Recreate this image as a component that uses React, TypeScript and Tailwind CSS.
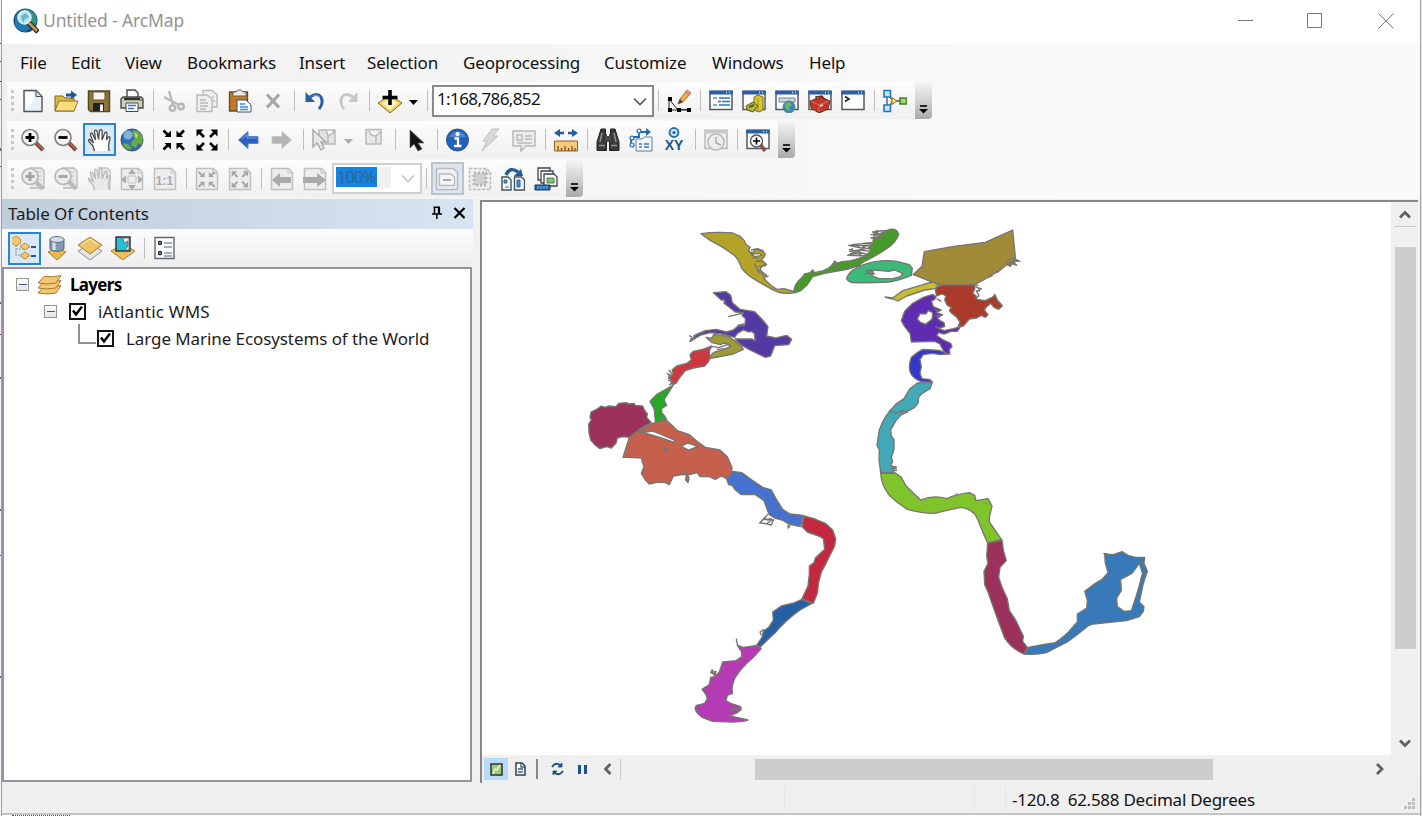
import React from "react";

type Kids = { children?: React.ReactNode };

const Ico = ({ children }: Kids) => (
  <div className="flex h-8 w-[33px] shrink-0 items-center justify-center pr-px">
    <svg width="24" height="24" viewBox="0 0 24 24" fill="none">
      {children}
    </svg>
  </div>
);

const Sep = () => (
  <div className="flex w-[9px] shrink-0 justify-center">
    <div className="h-[21px] w-px bg-[#bdbdbd]" />
  </div>
);

const Grip = () => (
  <div className="mr-[3px] flex w-[3px] shrink-0 flex-col gap-[3px]">
    {[0, 1, 2, 3].map((i) => (
      <div key={i} className="h-[3px] w-[3px] bg-[#c6c6c6]" />
    ))}
  </div>
);

const Overflow = () => (
  <div className="ml-[3px] flex h-full w-[17px] shrink-0 items-end justify-center rounded-r-sm bg-linear-to-b from-[#f4f4f4] via-[#d2d2d2] to-[#a9a9a9] pb-[5px]">
    <svg width="9" height="9" viewBox="0 0 9 9">
      <path d="M1 1h7" stroke="#000" strokeWidth="1.600" />
      <path d="M0 4h9L4.500 8.500z" fill="#000" />
    </svg>
  </div>
);

const Bar = ({ children }: Kids) => (
  <div className="flex h-[39px] items-start pl-[5px]">
    <div className="flex h-[37px] items-center rounded-r bg-linear-to-b from-[#fcfcfc] to-[#f0f0f0] pl-[4px]">
      {children}
    </div>
  </div>
);

const G = "#b9b9b9";

const Magnifier = ({ minus, gray }: { minus?: boolean; gray?: boolean }) => (
  <>
    {gray && <path d="M8 1h12l3 3v17H9" fill="#e9e9e9" stroke={G} strokeWidth="1.300" />}
    {gray && <path d="M15 5h5M17 9h3M17 13h3M17 17h3" stroke="#c4c4c4" />}
    <path d="M15 15l7 7" stroke={gray ? "#bababa" : "#7c3e33"} strokeWidth="4" />
    {!gray && <path d="M16 15.500l6 6" stroke="#b77566" strokeWidth="1.200" />}
    <circle cx="9" cy="9.500" r="8" fill={gray ? "#ececec" : "#f5f5f5"} stroke={gray ? "#b8b8b8" : "#858585"} strokeWidth="1.700" />
    <path d={minus ? "M4.500 9.500h9" : "M4.500 9.500h9M9 5v9"} stroke={gray ? "#a4a4a4" : "#000"} strokeWidth="2.800" />
  </>
);

const Hand = ({ gray }: { gray?: boolean }) => (
  <path
    d="M7.500 23 6 18 2 13.500Q.5 11 3 11.500L6.500 15 3.500 7Q3 4.500 5.200 5.200L8.500 12 7.500 3.500Q8 1 10 3L11.500 11.500 12.500 2.500Q14 .5 15.200 3L15 12 18 4.500Q19.800 3 20 5.500L19.500 12 21 9.500Q23 7.500 23 10.500L21.500 17 22 23"
    fill={gray ? "#e9e9e9" : "#fff"}
    stroke={gray ? "#b9b9b9" : "#4c4c4c"}
    strokeWidth="1.300"
  />
);

const Inward = ({ c = "#000" }: { c?: string }) => (
  <g fill={c} stroke={c}>
    <path d="M1.500 2.500l5 5M22 2.500l-5 5M1.500 21.500l5-5M22 21.500l-5-5" strokeWidth="2.600" />
    <path d="M9 2.500V9H2.500zM14.500 2.500V9H21zM2.500 15H9v6.500zM21 15h-6.500v6.500z" stroke="none" />
  </g>
);
const Outward = ({ c = "#000" }: { c?: string }) => (
  <g fill={c} stroke={c}>
    <path d="M4 4l5 5M20 4l-5 5M4 20l5-5M20 20l-5-5" strokeWidth="2.600" />
    <path d="M1.500 8.500V1.500h7zM15.500 1.500h7v7zM1.500 15.500v7h7zM22.500 15.500v7h-7z" stroke="none" />
  </g>
);

const GrayPage = ({ children }: Kids) => (
  <>
    <path d="M1.500 1.500h17l4 4v17h-21z" fill="#ededed" stroke="#c0c0c0" strokeWidth="1.500" />
    <path d="M18 2v4h4" stroke="#c0c0c0" />
    {children}
  </>
);

const Win = ({ children, gray }: Kids & { gray?: boolean }) => (
  <>
    <path d="M1 2.500h22v18H1z" fill={gray ? "#eee" : "#fbfcfd"} stroke={gray ? "#b9b9b9" : "#55585f"} strokeWidth="1.500" />
    <path d="M.3 1.500h23.400v4H.3z" fill={gray ? "#c7c7c7" : "#2a5fa5"} />
    {!gray && <path d="M17 3.500h1M20 3.500h1" stroke="#dce9f8" strokeWidth="1.500" />}
    {children}
  </>
);

const DropArrow = ({ gray }: { gray?: boolean }) => (
  <svg width="9" height="5" viewBox="0 0 9 5">
    <path d="M0 0h9L4.500 5z" fill={gray ? "#aaa" : "#000"} />
  </svg>
);

const Chevron = ({ c = "#555" }: { c?: string }) => (
  <svg width="14" height="9" viewBox="0 0 14 9" fill="none">
    <path d="M1 1.500l6 6 6-6" stroke={c} strokeWidth="1.600" />
  </svg>
);

function StandardBar() {
  return (
    <Bar>
      <Grip />
      <Ico>
        <path d="M3 1.500h12l6 6v15H3z" fill="#e9f1f8" stroke="#4d5159" strokeWidth="1.400" />
        <path d="M5 3h8v9L5 20z" fill="#fff" />
        <path d="M15 1.500v6h6z" fill="#d7dde3" stroke="#4d5159" />
      </Ico>
      <Ico>
        <path d="M1 22V7h8l2 2h9v13z" fill="#ddb646" stroke="#80651f" />
        <path d="M1 22l4-10h19l-4 10z" fill="#f9dd78" stroke="#8d7023" />
        <path d="M12 6h6" stroke="#1d5b98" strokeWidth="3" />
        <path d="M17 1.500L23 6l-6 4.500z" fill="#1d5b98" />
      </Ico>
      <Ico>
        <path d="M1.500 2h21v20.500h-19l-2-2z" fill="#8b7638" stroke="#55471e" strokeWidth="1.500" />
        <path d="M6 3h12v8H6z" fill="#f4f4f0" stroke="#60522d" />
        <path d="M6 14h11v8H6z" fill="#222" />
        <path d="M13 15.500h3V22h-3z" fill="#f6f6f6" />
      </Ico>
      <Ico>
        <path d="M7 9V1h8l3 3v5" fill="#f9fcff" stroke="#4b4b4b" strokeWidth="1.400" />
        <path d="M1 10l2-2h18l2 2v9H1z" fill="#ced0b4" stroke="#484b44" strokeWidth="1.400" />
        <path d="M4 10h16" stroke="#31342b" strokeWidth="2.500" />
        <path d="M6 14h12v8.500H6z" fill="#fff" stroke="#45484c" />
        <path d="M8 16.500h8M8 19.500h6" stroke="#3479bd" strokeWidth="1.300" />
        <path d="M20 11h2" stroke="#4b9b37" strokeWidth="1.500" />
      </Ico>
      <Sep />
      <Ico>
        <g stroke="#b8b8b8" strokeWidth="2.400">
          <path d="M7 2l4 14M2 8l15 8" />
          <circle cx="10.500" cy="19" r="2.800" />
          <circle cx="19" cy="17.500" r="2.800" />
        </g>
      </Ico>
      <Ico>
        <g fill="#efefef" stroke={G} strokeWidth="1.400">
          <path d="M8 1.500h9l5 4V18H8z" />
          <path d="M2 6h10l5 4v12.500H2z" />
          <path d="M5 11h6M5 14h8M5 17h8M5 20h6M17 8h2M18 12h2" />
        </g>
      </Ico>
      <Ico>
        <path d="M1.500 3h18v19h-18z" fill="#c17b26" stroke="#6f491b" strokeWidth="1.300" />
        <path d="M5 7V3h3l2-2h3l2 2h3v4z" fill="#e8e8e6" stroke="#66635e" />
        <path d="M9 11h9l5 5v7H9z" fill="#fff" stroke="#3e536a" />
        <path d="M12 15h5M12 18h8M12 20.500h8" stroke="#398bdc" strokeWidth="1.500" />
      </Ico>
      <Ico>
        <path d="M6 5.500l12 13M18 5.500l-12 13" stroke="#a6a6a6" strokeWidth="3.200" />
      </Ico>
      <Sep />
      <Ico>
        <path d="M7 8q7-5 11 0 3 6-2 12" stroke="#265f9c" strokeWidth="3" />
        <path d="M2.500 3v10H12z" fill="#265f9c" />
        <path d="M10 7q4-2 7 1" stroke="#76aee0" />
      </Ico>
      <Ico>
        <path d="M17 8Q10 3 6 8q-3 6 2 12" stroke="#c6c6c6" strokeWidth="2.800" />
        <path d="M21.500 3v10H12z" fill="#c6c6c6" />
      </Ico>
      <Sep />
      <Ico>
        <path d="M12 6l12 8-12 10L0 14z" fill="#f6ce63" stroke="#866724" />
        <path d="M12 9l8 5-8 7-8-7z" fill="#fff2b8" />
        <path d="M12 1v15M4.500 8.500h15" stroke="#000" strokeWidth="3.600" />
      </Ico>
      <div className="flex w-4 shrink-0 justify-center pr-1 pt-1">
        <DropArrow />
      </div>
      <Sep />
      <div className="flex h-[32px] w-[222px] shrink-0 items-start justify-between border-2 border-[#898989] bg-white pl-[3px]">
        <span className="text-[17px] leading-[23px] tracking-[-0.600px]">1:168,786,852</span>
        <div className="flex h-full items-center pr-[5px] pt-[2px]">
          <Chevron />
        </div>
      </div>
      <Sep />
      <Ico>
        <path d="M2 10l8 10L22 21H2z" stroke="#222" />
        <path d="M1 8h4v4H1zM1 19h4v4H1zM10 19h4v4h-4zM20 19h4v4h-4z" fill="#000" />
        <path d="M11 15l2-5 7-9 4 3-8 9z" fill="#eeb13f" stroke="#80612d" strokeWidth=".8" />
        <path d="M20 1l4 3-2 3-4-3z" fill="#d88c79" />
        <path d="M11 15l2-5 3 3z" fill="#554128" />
      </Ico>
      <Sep />
      <Ico>
        <Win>
          <path d="M10 9h11M13 12.500h8M10 16h11" stroke="#3275ba" strokeWidth="1.700" />
          <path d="M4 9h4M4 16h4" stroke="#4e90d0" strokeWidth="1.700" />
          <path d="M9 12.500h3" stroke="#d64731" strokeWidth="1.700" />
        </Win>
      </Ico>
      <Ico>
        <Win>
          <path d="M12 8l4-2 5 2v13l-4 2-5-2z" fill="#dac62b" stroke="#756b12" />
          <path d="M16 9v13" stroke="#9a8d1c" />
          <path d="M4 17l7-4 5 4-5 6-6-2z" fill="#b9b13a" stroke="#5c5a1c" />
          <path d="M7 18l5-2" stroke="#3d6b2d" strokeWidth="2" />
        </Win>
      </Ico>
      <Ico>
        <Win>
          <path d="M4 9h16v4H4z" fill="#d1d7dc" stroke="#74808b" />
          <circle cx="14" cy="18" r="6" fill="#3c87bd" stroke="#567c91" />
          <path d="M10 14l5-1 2 3-3 2 1 4-4-2z" fill="#69b768" />
        </Win>
      </Ico>
      <Ico>
        <Win>
          <path d="M2 12l11-4 9 4-2 8-9 4-8-5z" fill="#c0382a" stroke="#70251d" />
          <path d="M3 12l8 4 10-4M11 16v7" stroke="#e08070" strokeWidth=".8" />
          <path d="M8 11V8l6-1 2 3" stroke="#752b24" strokeWidth="1.500" />
          <path d="M12 17l3-1" stroke="#eadcd8" strokeWidth="1.500" />
        </Win>
      </Ico>
      <Ico>
        <Win>
          <path d="M4 7.500l4 2.500-4 2.500" stroke="#20242b" strokeWidth="1.600" />
        </Win>
      </Ico>
      <Sep />
      <Ico>
        <path d="M4 5v14M5 5l5 7M5 19l5-7h8" stroke="#46515e" strokeWidth="1.300" />
        <path d="M1 1.500h6.500V8H1zM1 16h6.500v6.500H1z" fill="#c4e1fa" stroke="#2673ba" strokeWidth="1.600" />
        <path d="M9 8.500l5 3.500-5 3.500z" fill="#ffe475" stroke="#99721c" />
        <path d="M17 9h6.500v6H17z" fill="#9fda6c" stroke="#3f812b" strokeWidth="1.600" />
      </Ico>
      <Overflow />
    </Bar>
  );
}

function ToolsBar() {
  return (
    <Bar>
      <Grip />
      <Ico><Magnifier /></Ico>
      <Ico><Magnifier minus /></Ico>
      <div className="flex h-[33px] w-[33px] shrink-0 items-center justify-center border-2 border-[#2d83d3] bg-[#d9e8f5]">
        <Ico><Hand /></Ico>
      </div>
      <Ico>
        <circle cx="12" cy="12" r="11" fill="#2f6fb5" stroke="#345171" />
        <circle cx="8" cy="7" r="4.500" fill="#a5cdf0" opacity=".7" />
        <path d="M13 2l5 1 5 6-1 8-4-2-2 5-5-3 1-4 3-3-3-3zM3 15l5 1 4 4-3 2-5-3z" fill="#6aaa46" />
        <path d="M14 4l4 3-2 4z" fill="#b5d983" />
      </Ico>
      <Sep />
      <Ico><Inward /></Ico>
      <Ico><Outward /></Ico>
      <Sep />
      <Ico>
        <path d="M1.500 12L11 3.500v5h10v7H11v5z" fill="#2c60c0" stroke="#5a83c9" />
        <path d="M5 11l5-4.500v3.500h10" stroke="#6fa1e7" />
      </Ico>
      <Ico>
        <path d="M21.500 12L12 3.500v5H2v7h10v5z" fill="#b4b4b4" stroke="#c6c6c6" />
      </Ico>
      <Sep />
      <Ico>
        <path d="M7 2h16v14H7zM14 2l2 6 4-2 3-4M16 8v8" fill="#e2e2e2" stroke="#b7b7b7" strokeWidth="1.400" />
        <path d="M1 2v17l4-4 4 7 3-2-3-6h5z" fill="#e7e7e7" stroke="#ababab" strokeWidth="1.500" />
      </Ico>
      <div className="flex w-[17px] shrink-0 justify-center pr-[3px] pt-1"><DropArrow gray /></div>
      <Ico>
        <path d="M4 1.500h15V16H4zM7 3q1 5 7 5l4-4M14 8v7" fill="#e9e9e9" stroke={G} strokeWidth="1.500" />
      </Ico>
      <Sep />
      <Ico>
        <path d="M6 2v18l4-4 4 7 4-2-4-6h6z" fill="#151515" stroke="#555" strokeWidth=".6" />
      </Ico>
      <Sep />
      <Ico>
        <circle cx="11.500" cy="12" r="11" fill="#2260bd" stroke="#335586" />
        <path d="M3 9Q11.500-2 20 9" fill="#76a5df" opacity=".6" />
        <circle cx="11.500" cy="6" r="2" fill="#fff" />
        <path d="M8.500 10.500h3.500V18M8 18h7.500" stroke="#fff" strokeWidth="2.300" />
      </Ico>
      <Ico>
        <path d="M13 1h7l-6 7h5L3 23l5-10H4z" fill="#d9d9d9" stroke="#c0c0c0" />
      </Ico>
      <Ico>
        <path d="M1 3h22v15h-9l-5 5v-5H1z" fill="#ededed" stroke="#b8b8b8" strokeWidth="1.500" />
        <path d="M5 7h5v5H5zM13 8h7M13 11h7M5 15h15" stroke={G} strokeWidth="1.500" />
      </Ico>
      <Sep />
      <Ico>
        <path d="M3 5h7M14 5h7" stroke="#205f9e" strokeWidth="2.300" />
        <path d="M0 5l6-4v8zM24 5l-6-4v8z" fill="#205f9e" />
        <path d="M.5 13h23v10H.5z" fill="#f5ca7c" stroke="#966025" />
        <path d="M4 18v5M7.500 20v3M11 18v5M14.500 20v3M18 18v5M21 20v3" stroke="#6f4b25" strokeWidth="1.200" />
      </Ico>
      <Sep />
      <Ico>
        <path d="M5 1h4.500v4l1 3v14.500H1V14zM14.500 1H19l4 13v8.500h-9.500V8l1-3z" fill="#3b3b3b" stroke="#222" />
        <path d="M9 8h6v6H9z" fill="#4a4a4a" />
        <path d="M6 5L4 14M18 5l2 9M3 17.500h6M15 17.500h6" stroke="#929292" strokeWidth="1.500" />
      </Ico>
      <Ico>
        <path d="M2 16V9h8V4h9" stroke="#236baa" strokeWidth="1.800" />
        <path d="M17 0l5 4-5 4z" fill="#236baa" />
        <g fill="#e5f2ff" stroke="#236baa" strokeWidth="1.200">
          <circle cx="3" cy="17" r="2" />
          <circle cx="3" cy="10" r="2" />
          <circle cx="10" cy="3" r="2" />
        </g>
        <path d="M7 11h6l2-2h8v14H7z" fill="#f3f8fc" stroke="#5f7e9c" />
        <path d="M10 16h3M15 16h5M10 19h3M15 19h5" stroke="#3f76aa" strokeWidth="1.400" />
      </Ico>
      <div className="flex h-8 w-[33px] shrink-0 flex-col items-center justify-center pr-px">
        <svg width="12" height="11" viewBox="0 0 12 11" fill="none">
          <circle cx="6" cy="5.500" r="4.400" fill="#d2e8fa" stroke="#2871b0" strokeWidth="2" />
          <circle cx="6" cy="5.500" r="1.500" fill="#175492" />
        </svg>
        <span className="font-['Liberation_Sans',sans-serif] text-[14px] font-bold leading-[14px] text-[#175492]">XY</span>
      </div>
      <Sep />
      <Ico>
        <Win gray>
          <circle cx="12" cy="14" r="8" fill="#ededed" stroke={G} strokeWidth="1.500" />
          <path d="M12 9v6l5 2" stroke="#aaa" strokeWidth="1.400" />
        </Win>
      </Ico>
      <Sep />
      <Ico>
        <Win>
          <path d="M15 17l4 6" stroke="#88513f" strokeWidth="3.500" />
          <circle cx="10.500" cy="13" r="6" fill="#f9f9f9" stroke="#4e5156" strokeWidth="1.300" />
          <path d="M7 13h7M10.500 9.500v7" stroke="#000" strokeWidth="1.600" />
        </Win>
      </Ico>
      <Overflow />
    </Bar>
  );
}

function LayoutBar() {
  return (
    <Bar>
      <Grip />
      <Ico><Magnifier gray /></Ico>
      <Ico><Magnifier gray minus /></Ico>
      <Ico>
        <path d="M11 1h9l3 3v18H12" fill="#eee" stroke="#c0c0c0" strokeWidth="1.300" />
        <Hand gray />
      </Ico>
      <Ico>
        <GrayPage>
          <path d="M12 2l4 5H8zM12 23l4-5H8zM1 12.500l5-4v8zM23 12.500l-5-4v8z" fill="#aaa" />
          <path d="M8 9h8v7H8z" stroke="#c2c2c2" />
        </GrayPage>
      </Ico>
      <Ico>
        <GrayPage>
          <text x="11.500" y="18" textAnchor="middle" fontFamily="Liberation Sans, sans-serif" fontWeight="700" fontSize="12" fill="#aaa">1:1</text>
        </GrayPage>
      </Ico>
      <Sep />
      <Ico>
        <GrayPage><g transform="translate(2.500 3) scale(.78)"><Inward c="#a6a6a6" /></g></GrayPage>
      </Ico>
      <Ico>
        <GrayPage><g transform="translate(2.500 3) scale(.78)"><Outward c="#a6a6a6" /></g></GrayPage>
      </Ico>
      <Sep />
      <Ico>
        <GrayPage><path d="M2 13l8-7v4h11v6H10v4z" fill="#aaa" /></GrayPage>
      </Ico>
      <Ico>
        <GrayPage><path d="M23 13l-9-7v4H0v6h14v4z" fill="#aaa" /></GrayPage>
      </Ico>
      <div className="flex h-[31px] w-[90px] shrink-0 items-start justify-between border-2 border-[#d0d0d0] bg-white pl-[2px] pr-[5px] pt-[2px]">
        <div className="flex h-[21px] w-[55px] bg-[#f0f0f0]">
          <span className="h-[20px] w-[41px] bg-[#1683e0] pl-px text-[16.500px] leading-[19px] tracking-[-0.900px] text-[#346590]">100%</span>
        </div>
        <div className="flex h-[23px] items-center"><Chevron c="#c0c0c0" /></div>
      </div>
      <Sep />
      <div className="flex h-[33px] w-[33px] shrink-0 items-center justify-center border-2 border-[#bcc3ca] bg-[#dce6ef]">
        <Ico>
          <path d="M1.500 1.500h17l4 4v17h-21z" fill="#edf0f3" stroke="#b4bac0" strokeWidth="1.500" />
          <path d="M4.500 7h11l4 3v8.500h-15z" fill="#f5f6f7" stroke={G} strokeWidth="1.400" />
          <path d="M8 13h8" stroke="#aaa" strokeWidth="2" />
        </Ico>
      </div>
      <Ico>
        <path d="M1.500 1.500h17l4 4v17h-21z" fill="#eee" stroke="#b8b8b8" strokeWidth="1.500" strokeDasharray="3 1.500" />
        <path d="M6 6h12v12H6z" fill="#d0d0d0" stroke="#b6b6b6" strokeWidth="3" strokeDasharray="2 2" />
        <path d="M18 2v4h4" stroke={G} />
      </Ico>
      <Ico>
        <path d="M5 8Q9-1 17 5" stroke="#225c95" strokeWidth="3.400" />
        <path d="M13 9h9l-2-7z" fill="#225c95" />
        <path d="M1 10h6l3 3v10H1zM13.500 10h7l3 3v10h-10z" fill="#f7fafc" stroke="#46515a" strokeWidth="1.400" />
        <path d="M3 13h3v3H3zM4 20h4M16 13h3v7h-3z" fill="#438bc9" stroke="#276aa8" />
      </Ico>
      <Ico>
        <g fill="#fff" stroke="#3f4347" strokeWidth="1.300">
          <path d="M4 1h12v12H4z" />
          <path d="M7 4h12v12H7z" />
          <path d="M10 7h10l3 3v9H10z" />
        </g>
        <path d="M13 11h7v5h-7z" fill="#8ac278" stroke="#3f8145" />
        <path d="M1 18h15v5H1z" fill="#2469ac" stroke="#143b64" />
        <path d="M4 19v3M7 19v3M10 19v3M13 19v3" stroke="#8fc3ef" />
      </Ico>
      <Overflow />
    </Bar>
  );
}

function Expander() {
  return (
    <div className="flex h-[13px] w-[13px] shrink-0 items-center justify-center border border-[#959595] bg-linear-to-b from-white to-[#e4e4e4]">
      <div className="h-[1.500px] w-[8px] bg-[#3c5a96]" />
    </div>
  );
}

function Check() {
  return (
    <div className="flex h-[17px] w-[17px] shrink-0 items-center justify-center border-2 border-[#151515] bg-white">
      <svg width="13" height="13" viewBox="0 0 13 13" fill="none">
        <path d="M2 5.500l3 4 6-8" stroke="#000" strokeWidth="2.400" />
      </svg>
    </div>
  );
}

function Contents() {
  return (
    <div className="flex w-[471px] shrink-0 flex-col">
      <div className="flex h-[30px] shrink-0 items-center justify-between bg-linear-to-r from-[#c0cddb] to-[#d7e4f2] pl-[6px] pr-[7px]">
        <span className="text-[17px] tracking-[-0.070px] text-[#1c1c1c]">Table Of Contents</span>
        <svg className="mb-[3px]" width="35" height="16" viewBox="0 0 35 16" fill="none" stroke="#000">
          <path d="M2.500 2.200h6.500M3.500 2v7M1 9h10M5.800 9v5" strokeWidth="1.500" />
          <path d="M8 2v7" strokeWidth="2.200" />
          <path d="M23.500 3l10 10M33.500 3l-10 10" strokeWidth="2.200" />
        </svg>
      </div>
      <div className="flex h-[38px] shrink-0 items-center bg-linear-to-b from-[#fcfcfc] to-[#eeeeee] pl-[6px]">
        <div className="flex h-[33px] w-[33px] items-center justify-center border-2 border-[#2d83d3] bg-[#d9e8f5]">
          <Ico>
            <path d="M4 6v13h8M4 13h8" stroke="#8f9cab" strokeWidth="1.200" strokeDasharray="2 1" />
            <g fill="#f1ca76" stroke="#b98b39">
              <path d="M4 0l4.500 3v4L4 10-.5 7V3z" />
              <path d="M13 7l5 3.500-5 3.500-5-3.500z" />
              <path d="M13 16l5 3.500-5 3.500-5-3.500z" />
            </g>
            <path d="M19 11h5M19 20h5" stroke="#1e5a94" strokeWidth="2" />
          </Ico>
        </div>
        <Ico>
          <path d="M3 16l9-4 9 4-9 8z" fill="#edb94a" stroke="#a17c38" />
          <path d="M5 3v10q7 5 14 0V3z" fill="#8398b1" stroke="#55677c" />
          <path d="M9 5v9" stroke="#dbe6f1" strokeWidth="3" />
          <ellipse cx="12" cy="3.500" rx="7" ry="3" fill="#d2dce7" stroke="#607186" />
        </Ico>
        <Ico>
          <path d="M0 15l12-7 12 7-12 9z" fill="#e7e7e5" stroke="#8f8f8b" />
          <path d="M0 9l12-8 12 8-12 9z" fill="#efc469" stroke="#a47d3b" />
          <path d="M4 9l8-6 8 6" stroke="#ffe7ac" />
        </Ico>
        <Ico>
          <path d="M0 15l12-7 12 7-12 9z" fill="#efbf5b" stroke="#a47d3b" />
          <path d="M5 1h14v14H5z" fill="#27bfd5" stroke="#32373a" strokeWidth="1.500" />
          <path d="M12 2l1 5 4-2v5l-3 4h4V2z" fill="#eee" stroke="#696969" strokeWidth=".8" />
        </Ico>
        <Sep />
        <Ico>
          <path d="M2 1.500h19v21H2z" fill="#fbfcfd" stroke="#5f6873" strokeWidth="1.400" />
          <path d="M11 7h8M11 17h8M11 11h8M11 20h8" stroke="#8f9499" strokeWidth="1.300" />
          <circle cx="7" cy="7" r="1.500" stroke="#222" strokeWidth="1.400" />
          <circle cx="7" cy="17" r="1.500" stroke="#222" strokeWidth="1.400" />
        </Ico>
      </div>
      <div className="flex h-[515px] w-[470px] flex-col border-2 border-[#9295a0] bg-white pt-[2px] text-[17px] text-[#1d1d1d]">
        <div className="flex h-[27px] items-center pl-[12px]">
          <Expander />
          <svg className="ml-[8px] mr-[8px]" width="25" height="22" viewBox="0 0 25 22">
            {[11, 6, 1].map((y) => (
              <path key={y} transform={`translate(0 ${y})`} d="M1 8L7 1.500q8 1 17-1l-5 7.500q-9 2-18 0z" fill="#f3c875" stroke="#a57930" />
            ))}
          </svg>
          <span className="font-bold tracking-[-0.700px] text-black">Layers</span>
        </div>
        <div className="flex h-[27px] items-center pl-[40px]">
          <Expander />
          <div className="ml-[12px] mr-[12px]"><Check /></div>
          <span className="tracking-[0.180px]">iAtlantic WMS</span>
        </div>
        <div className="flex h-[27px] items-center pl-[74px]">
          <div className="mb-[9px] mr-[1px] h-[20px] w-[18px] border-b-2 border-l-2 border-[#8f8f8f]" />
          <Check />
          <span className="ml-[12px] tracking-[-0.085px]">Large Marine Ecosystems of the World</span>
        </div>
      </div>
    </div>
  );
}

function MapView() {
  return (
    <svg width="909" height="553" viewBox="482 202 909 553" className="block shrink-0 bg-white">
      <g stroke="#777570" strokeWidth="4" strokeLinejoin="round" fillRule="evenodd">
        <g transform="translate(560 220) scale(.33333)">
          <path fill="#b3a329" d="M423 41Q470 34 518 39L541 49 553 62 558 74 570 81 566 93 578 99 586 88 606 92 616 102 612 112 604 118 612 128 620 134 606 138 600 150 608 158 620 166 612 172 616 180 626 190 638 200 650 208 672 206 694 212 706 218Q664 226 632 206L590 182Q560 165 545 145 536 118 524 107 500 88 478 76 448 62 423 41zM574 103l10 7 22-4-8-6z" />
          <path fill="none" d="M573 90l20-4 19 8M578 113l18 2M584 132l10 20 14 2M588 124l20-1 10 8M596 140l22-3M604 153l8 18 14-2M592 150l4 8 16 1M570 96l8 10" />
          <path fill="#469b27" d="M700 218L706 196 716 182 728 170 734 162 742 160 750 158 758 150 764 158 790 152 806 144 816 135 824 123 832 130 870 123 900 116V136L862 148 794 160 758 170 742 194 722 212Q712 218 700 218z" />
          <path fill="#533aa2" d="M460 218L498 215 512 226 517 248 540 268 584 275 608 300 624 320 620 348 648 354 680 346 695 358 686 374 644 377 632 408 616 412 570 390 545 376 525 357 576 357 585 363 584 342 575 334 566 336 550 330 532 340 524 352 486 342 450 338 420 346 390 365 408 344 436 332 468 328 500 336 520 330 534 318 554 315 557 297 546 286 550 278 526 276 508 262 492 250 494 240 484 240z" />
          <path fill="none" d="M504 290l26-6 20-5M390 363l6-12-9-4M400 348l34-14M552 312l-20 4" />
          <path fill="#9d9b35" d="M438 352L454 355 462 343 506 350 540 374 550 388 520 402 448 416 Q452 402 464 396 494 390 512 378 494 364 482 374L456 368z" />
          <path fill="none" d="M456 380l22 2 26-8M470 388l24-2" />
          <path fill="#cc3740" d="M338 494L334 482 328 475 340 462 336 450 350 438 380 430 394 420 390 404 400 394 428 388 456 378 448 392 448 404 450 412 446 424 434 438 400 444 376 452 358 474 348 490z" />
          <path fill="none" d="M326 450l12 14-14 4M320 460l14 6-10 10M324 480l12 6-8 10M332 494l8-12" />
          <path fill="#26a725" d="M339 496L292 522 270 544 283 568 286 604 302 606 320 598 314 588 306 580 304 566 320 556 312 540 328 514z" />
          <path fill="#9c315c" d="M90 592L93 576 110 568 124 558 134 562 148 558 168 560 176 550 200 548 206 552 222 550 226 556 248 558 252 568 262 582 260 592 274 608 240 626 208 652 188 650 172 654 168 670 154 684 140 680 120 686 104 674 92 660 87 638 86 612 94 600z" />
          <path fill="#c5604d" d="M189 712L208 652 232 634 278 610 318 600 332 612 352 632 388 644 416 668 436 682 480 690 502 710 516 742 514 764 500 776 484 768 466 778 448 770 420 770 412 758 388 764 366 764 340 768 328 794 316 788 294 786 268 792 256 780 244 760 252 740 246 724 246 714 204 712z" />
          <path fill="#fff" d="M250 638L276 633 300 642 345 661 342 667 300 652zM363 679L384 669 414 679 386 690z" />
          <path fill="#c5604d" d="M380 758L377 780 384 788 387 774z" />
          <path fill="none" d="M314 684l8 3-4 7zM234 640l20-6M306 618l6 3" />
          <path fill="#3b9a60" strokeWidth="2" d="M298 604l10-14 12 10z" />
        </g>
        <g transform="translate(840 220) scale(.33333)">
          <path fill="#469b27" d="M-10 130Q10 122 30 124L72 110 94 92 84 84 98 72 100 58 118 50 130 36 150 28Q170 24 176 42 170 66 140 86 104 110 74 124 56 138 34 142L-10 152z" />
          <path fill="none" d="M141 31l-43 5 16 5M142 39L93 44l38 3-38 7 33 3M97 67l-31 4-31 3 25 4M91 76H25l39 8 13-2M86 85l-57 9 30-2-36 14 54 2-48-3M35 84l6 9M53 95l29 8-14 5M52 93l-25-5M103 33v9M109 30l9 17M38 97l-4 10M54 96l9 13M100 48l34-12M66 81l35-8M96 36l30-4M100 58l24-8M70 70l30 2M60 90l32 4M30 100l40 1" />
          <path fill="#3cba79" d="M20 173Q32 147 71 134 119 117 170 124L208 134 217 145 214 166 180 179 148 186Q90 189 36 188 20 182 20 173zM90 158L104 150 146 154 164 150 188 160 182 170 160 175 118 176 98 168z" />
          <path fill="none" d="M76 153l16-4 11 13-15-3-14 2M88 149l-5 13M80 156l18 8" />
          <path fill="#a18a38" d="M219 164L246 139 253 95 342 79 436 67 518 30 526 112 524 126 510 138 500 134 478 152 450 168 430 180 404 194Q358 198 300 194L268 183 236 170z" />
          <path fill="none" d="M500 123l18-9 22 10-23-1 13 13-21-9 3 12-14-9M470 158l10-8M446 172l12-6" />
          <path fill="#c6bf34" d="M135 231L158 234 188 212 242 196 276 186 296 194 286 206 254 210 200 228 174 243 162 238 150 236z" />
          <path fill="#aa3b2a" d="M286 210Q290 192 330 195L405 195 404 208 398 220 408 228 410 238 436 242 456 232 466 226 472 240 487 258 476 268 462 262 452 250 436 264 434 272 444 284 436 292 424 286 410 294 388 297 370 318 354 320 360 306 350 292 338 282 328 272 334 262 322 256 314 240 318 228 306 222 290 228z" />
          <path fill="none" d="M407 201l17 6-15 6 8 14-10 9M403 193l12 4M410 214l10-2M466 222l-8 10M486 256l-10-10" />
          <path fill="#5f2bb0" d="M278 223L288 230 284 238 274 244 280 260 304 270 288 278 308 284 292 294 300 302 312 308 314 320 296 324 312 332 340 326 362 320 352 334 334 334 312 342 296 338 290 346 306 358 332 370 336 380 328 388 330 402 316 400 308 388 300 372 284 364 214 366 210 340 194 320 184 302 194 274 218 250 250 232zM232 297L240 281 258 282 265 271 278 278 277 296 257 313 240 306z" />
          <path fill="none" d="M284 268l14 8M284 286l16 2M286 320l16 8M290 236l14 8" />
          <path fill="#3437c9" d="M325 402L298 391 248 388 234 396 214 412Q202 446 214 464 230 484 250 486L278 486 268 478 246 476 240 460 244 440 240 418 250 404 278 400 300 404z" />
        </g>
        <g transform="translate(860 370) scale(.33333)">
          <path fill="#41a9b8" d="M172 39L217 37 210 56 184 72 176 82 174 100 162 114 146 122 130 126 108 152 92 180 94 198 102 208 102 238 94 262 98 276 92 284 100 292 102 308 62 308 57 270 58 240 51 226 58 180 Q70 146 90 122L106 104 132 86 150 56z" />
          <path fill="none" d="M95 290l14 1-11 5h13M98 302l13-1M88 121l20 9 22-9-5 13 20-9" />
          <path fill="#80c42c" d="M62 310L106 309 124 322 138 348 182 390Q222 374 260 386 288 372 328 368L344 376 348 392 384 386 396 408 388 442 388 456 408 484 424 508 383 520 372 494 352 446Q340 416 302 412 264 420 224 430 184 430 142 418 110 398 88 376 64 346 62 310z" />
          <path fill="none" d="M284 375l8-6M374 398l10 6M358 436l6 3" strokeWidth="2" />
          <path fill="#9c315c" d="M383 519L426 510 430 540 439 572 420 592 416 622 426 652 442 686 448 722 468 752 480 778 490 798 488 814 502 832 492 852Q454 836 434 804 406 730 384 666L374 644 372 604 384 580 380 560z" />
          <path fill="#3779b9" d="M492 852L505 832Q544 824 586 818 618 796 634 776L652 756 652 732 680 714 682 690 674 664 700 644 726 628 744 608 736 580 734 552 760 554 786 545 804 556 826 562 854 562 852 580 862 604 850 640 838 696 852 710 850 724 838 740 800 752 700 762 684 768Q650 796 622 816 590 832 560 848 526 856 492 852zM782 628L816 610 838 580 848 612 828 680 814 722 792 724 772 710 770 684 784 662z" />
          <path fill="none" d="M838 576l14 4M730 550l12 2M846 614l-4 16" />
        </g>
        <g transform="translate(680 460) scale(.33333)">
          <path fill="#4671ce" d="M140 58L158 34 186 38 216 60 248 82 274 90 288 116 308 148 330 162 370 166 362 200 326 192 306 180 284 174 268 164 262 150 252 122 226 104 184 104 166 90 156 76 146 74z" />
          <path fill="none" d="M266 160l-27 29 21 2 16-12-17 1M281 177l-7 18-22-5M259 169l-7 10 24-3M323 194l2 10 6-8" />
          <path fill="#c4283f" d="M372 168L402 176 436 190 458 210 467 236 464 258 436 314 424 336 416 366 412 400 400 430 366 416 384 378 388 342 388 318 402 308 406 294 434 268 430 236 416 228 382 216 366 200z" />
          <path fill="#255fa4" d="M230 556L246 532 250 514 266 502 280 480 278 456 304 438 344 428 366 418 396 430 360 450Q316 482 284 520 256 546 240 562z" />
          <path fill="none" d="M252 508l-12 8 4 10" />
          <path fill="#b53bb5" d="M172 556L190 562 232 556 244 566 222 590Q184 622 166 652 152 682 158 700L142 706 138 722 152 730 182 740 184 748 172 758 150 768 204 780 190 784 160 786 98 784 66 772Q36 748 50 736L74 730 82 716 78 704 66 688 88 674 92 652 104 650 118 636 128 606 168 602 186 590 184 574z" />
          <path fill="none" d="M174 558l-5-18 1-4M95 627l12 19-15-9 16-3-6 17 7-9M147 750l19 1 10-4-14-3-8 7M92 632l4 8" />
        </g>
      </g>
    </svg>
  );
}

function MapPane() {
  return (
    <div className="flex h-[583px] w-[938px] shrink-0 flex-col border-l-2 border-t-2 border-[#888]">
      <div className="flex h-[555px]">
        <MapView />
        <div className="ml-[3px] flex h-[553px] w-[22px] flex-col items-center bg-[#f0f0f0]">
          <div className="flex h-[25px] w-full items-center justify-center border-b border-[#c8c8c8]">
            <svg width="12" height="9" viewBox="0 0 12 9" fill="none"><path d="M1 7.500l5-5 5 5" stroke="#606060" strokeWidth="2.700" /></svg>
          </div>
          <div className="mt-[20px] h-[402px] w-[21px] bg-[#cdcdcd]" />
          <div className="mt-auto pb-[7px]">
            <svg width="12" height="9" viewBox="0 0 12 9" fill="none"><path d="M1 1.500l5 5 5-5" stroke="#606060" strokeWidth="2.700" /></svg>
          </div>
        </div>
      </div>
      <div className="flex h-[24px] items-center bg-[#efefef] pl-[2px]">
        <div className="flex h-[22px] w-[24px] items-center justify-center bg-[#b7daf6]">
          <svg width="13" height="13" viewBox="0 0 13 13"><path d="M1 1h11v11H1z" fill="#99cf72" stroke="#333" strokeWidth="1.500" /><path d="M3 11l2-5 2 1 3-5" stroke="#ecf5ce" fill="none" strokeWidth="1.500" /></svg>
        </div>
        <svg className="ml-[6px]" width="13" height="14" viewBox="0 0 13 14" fill="none"><path d="M2 1h6l3 3v9H2z" fill="#fff" stroke="#35404b" strokeWidth="1.500" /><path d="M7 1v4h4M4 7h5M4 10h5" stroke="#345e87" strokeWidth="1.300" /></svg>
        <div className="ml-[9px] h-[20px] w-[2px] bg-[#888]" />
        <svg className="ml-[12px]" width="15" height="14" viewBox="0 0 15 14" fill="none" stroke="#204f83" strokeWidth="1.900"><path d="M2 5q4-6 9-1M13 9q-4 6-9 1" /><path d="M12 1v4H8zM3 13V9h4z" fill="#204f83" strokeWidth=".8" /></svg>
        <div className="ml-[13px] flex gap-[3px]"><div className="h-[9px] w-[3px] bg-[#185092]" /><div className="h-[9px] w-[3px] bg-[#185092]" /></div>
        <svg className="ml-[17px]" width="8" height="12" viewBox="0 0 8 12" fill="none"><path d="M6.500 1l-5 5 5 5" stroke="#606060" strokeWidth="2.700" /></svg>
        <div className="ml-[8px] h-[21px] w-px bg-[#ccc]" />
        <div className="ml-[134px] h-[21px] w-[458px] bg-[#cdcdcd]" />
        <svg className="ml-[162px]" width="9" height="12" viewBox="0 0 9 12" fill="none"><path d="M2 1l5 5-5 5" stroke="#606060" strokeWidth="2.700" /></svg>
      </div>
    </div>
  );
}

const Edge = () => (
  <div className="flex w-[2px] shrink-0 flex-col border-r border-[#9c9ca0] bg-[#f4f2f8]">
    <div className="mt-[43px] h-px bg-[#555]" />
    <div className="mt-[17px] h-px bg-[#555]" />
    <div className="mt-[19px] h-px bg-[#333]" />
    <div className="mt-[17px] h-px bg-[#7d2945]" />
    <div className="mt-[48px] h-[3px] bg-[#656579]" />
    <div className="mt-[15px] h-px bg-[#555]" />
    <div className="mt-[135px] h-[2px] bg-[#62606f]" />
    <div className="mt-[30px] h-px bg-[#7d2945]" />
    <div className="mt-[42px] h-[2px] bg-[#62606f]" />
    <div className="mt-[130px] h-[2px] bg-[#62606f]" />
    <div className="mt-[44px] h-px bg-[#555]" />
    <div className="mt-[120px] h-[2px] bg-[#62606f]" />
  </div>
);

const menus: [string, string][] = [
  ["File", "w-[51px]"],
  ["Edit", "w-[54px]"],
  ["View", "w-[62px]"],
  ["Bookmarks", "w-[112px]"],
  ["Insert", "w-[68px]"],
  ["Selection", "w-[96px]"],
  ["Geoprocessing", "w-[141px]"],
  ["Customize", "w-[108px]"],
  ["Windows", "w-[97px]"],
  ["Help", "w-[60px]"],
];

export default function App() {
  return (
    <div className="flex h-[816px] w-[1422px] overflow-hidden bg-[#f1f1f1] font-['Noto_Sans','Open_Sans',sans-serif] text-[#111]">
      <Edge />
      <div className="flex w-[1418px] shrink-0 flex-col">
        <header className="flex h-[44px] shrink-0 items-center bg-white pb-[3px] pl-[11px]">
          <svg width="26" height="26" viewBox="0 0 26 26" fill="none">
            <circle cx="12.500" cy="12.500" r="12" fill="#174e7d" />
            <path d="M2 9q4-8 12-8 7 1 10 8l-3 8-9 7Q5 22 2 17z" fill="#207bab" />
            <path d="M16 2l6 4 2 8-4 6-5-5-9-1 2-10z" fill="#349283" />
            <circle cx="11.500" cy="9.500" r="6.500" fill="#b8e1f3" stroke="#e9f8fb" strokeWidth="1.400" />
            <path d="M8 8l5-3 3 4-4 2-2 4z" fill="#71b4c4" />
            <path d="M16 15l9 9" stroke="#2e271d" strokeWidth="5" />
            <path d="M16 15l8 8" stroke="#ca984e" strokeWidth="2.600" />
          </svg>
          <span className="ml-[4px] text-[17.500px] tracking-[-0.150px] text-[#949494]">Untitled - ArcMap</span>
          <svg className="ml-auto mr-[25px]" width="158" height="18" viewBox="0 0 158 18" fill="none" stroke="#777">
            <path d="M1 8.500h15M70.500 1.500h14v14h-14zM141.500 1.500l15 15M156.500 1.500l-15 15" />
          </svg>
        </header>
        <div className="flex h-[155px] shrink-0 flex-col bg-linear-to-r from-[#f0f0f0] to-[#fafafa] to-75%">
          <nav className="flex h-[38px] items-center pl-[18px] text-[17px] tracking-[-0.150px]">
            {menus.map(([m, w]) => (
              <div key={m} className={w}>{m}</div>
            ))}
          </nav>
          <StandardBar />
          <ToolsBar />
          <LayoutBar />
        </div>
        <main className="flex h-[584px] shrink-0">
          <Contents />
          <div className="ml-[7px] mt-px"><MapPane /></div>
        </main>
        <footer className="flex h-[30px] shrink-0 items-center bg-[#efefef]">
          <div className="h-6 w-[783px] border-r border-[#e5e5e5]" />
          <div className="h-6 w-[190px] border-r border-[#e5e5e5]" />
          <div className="h-6 w-[31px] border-r border-[#e5e5e5]" />
          <span className="ml-[6px] whitespace-pre pt-[4px] text-[17px] tracking-[-0.260px]">-120.8  62.588 Decimal Degrees</span>
          <svg className="ml-auto mr-[4px] mt-[12px]" width="12" height="12" viewBox="0 0 12 12" fill="#bdbdbd">
            <path d="M8 0h3v3H8zM4 4h3v3H4zM8 4h3v3H8zM0 8h3v3H0zM4 8h3v3H4zM8 8h3v3H8z" />
          </svg>
        </footer>
        <div className="flex h-[3px] border-t-2 border-[#c4c4c4] bg-white pl-[10px]">
          <div className="h-px w-[58px] border-t border-dotted border-[#6c3a71]" />
        </div>
      </div>
      <div className="w-[2px] border-l border-[#a6a6a6] bg-[#dedede]" />
    </div>
  );
}
